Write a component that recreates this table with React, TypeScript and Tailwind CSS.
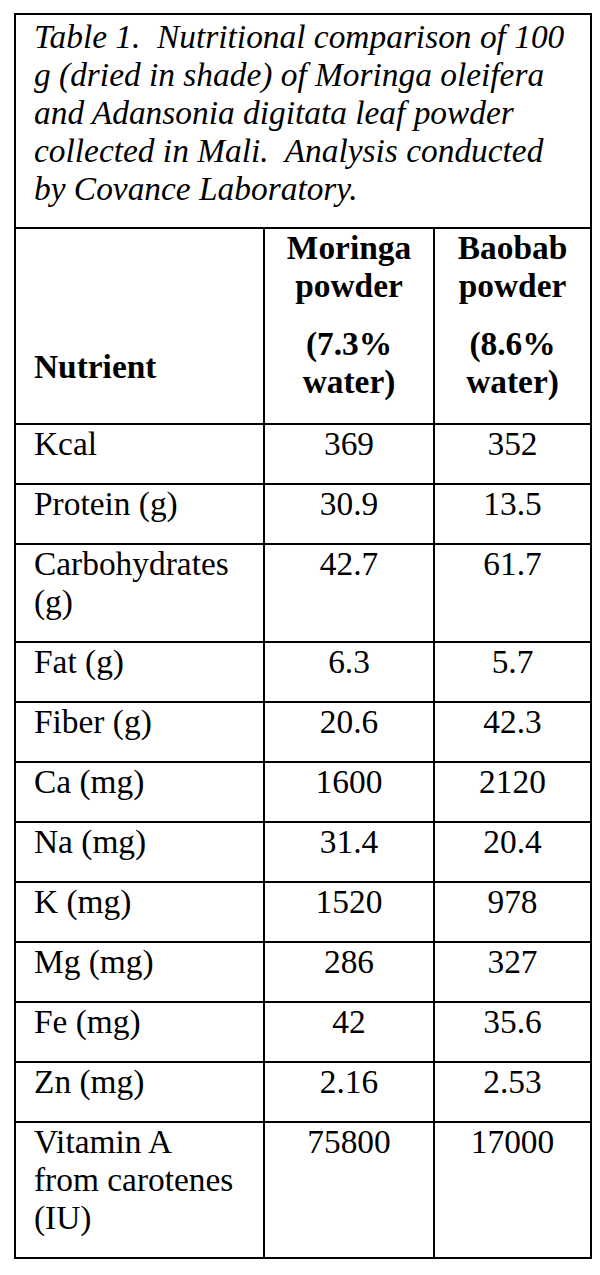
import React from 'react';

const rows: [string, string, string][] = [
  ['Kcal', '369', '352'],
  ['Protein (g)', '30.9', '13.5'],
  ['Carbohydrates\n(g)', '42.7', '61.7'],
  ['Fat (g)', '6.3', '5.7'],
  ['Fiber (g)', '20.6', '42.3'],
  ['Ca (mg)', '1600', '2120'],
  ['Na (mg)', '31.4', '20.4'],
  ['K (mg)', '1520', '978'],
  ['Mg (mg)', '286', '327'],
  ['Fe (mg)', '42', '35.6'],
  ['Zn (mg)', '2.16', '2.53'],
  ['Vitamin A\nfrom carotenes\n(IU)', '75800', '17000'],
];

export default function App() {
  return (
    <div className="w-[600px] h-[1275px] bg-white pt-[13px] pl-[14px] font-['Liberation_Serif',serif] text-black">
      <table className="w-[576px] table-fixed border-collapse border-2 border-black text-[33.4px] leading-[38px]">
        <colgroup>
          <col className="w-[249px]" />
          <col className="w-[170px]" />
          <col className="w-[157px]" />
        </colgroup>
        <tbody>
          {/* Caption */}
          <tr>
            <td colSpan={3} className="border-2 border-black h-[214px] align-top pl-[18px] pr-[12px] pt-[3px] italic">
              Table 1.&nbsp; Nutritional comparison of 100 g (dried in shade) of Moringa oleifera and Adansonia digitata leaf powder collected in Mali.&nbsp; Analysis conducted by Covance Laboratory.
            </td>
          </tr>

          {/* Header */}
          <tr className="font-bold">
            <td className="border-2 border-black h-[196px] align-bottom pl-[18px] pb-[37px]">Nutrient</td>
            <td className="border-2 border-black align-top text-center pt-0">
              <p>Moringa powder</p>
              <p className="mt-[20px]">(7.3% water)</p>
            </td>
            <td className="border-2 border-black align-top text-center pt-0">
              <p>Baobab powder</p>
              <p className="mt-[20px]">(8.6% water)</p>
            </td>
          </tr>

          {/* Data rows */}
          {rows.map(([name, moringa, baobab]) => (
            <tr key={name}>
              <td className="border-2 border-black align-top whitespace-pre-line pl-[18px] pr-[4px] pt-0 pb-[20px]">{name}</td>
              <td className="border-2 border-black align-top text-center pt-0 pb-[20px]">{moringa}</td>
              <td className="border-2 border-black align-top text-center pt-0 pb-[20px]">{baobab}</td>
            </tr>
          ))}
        </tbody>
      </table>
    </div>
  );
}
